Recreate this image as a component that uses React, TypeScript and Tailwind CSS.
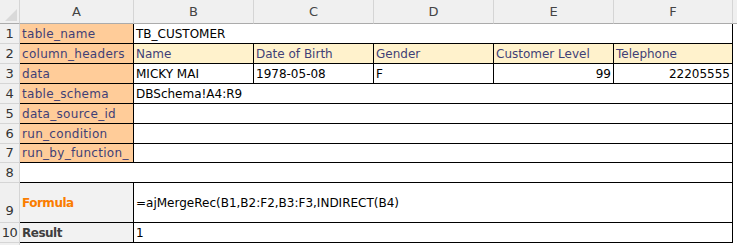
import React from "react";

/* Sheet: ajMergeRec example, laid out like a spreadsheet grid */

const font = "font-['DejaVu_Sans',sans-serif] text-[12px]";

const colHead =
  "flex items-center justify-center bg-[#f0f0f0] text-[#444] text-[13px] border-r border-r-[#d5d5d5] border-b border-b-[#ababab]";
const rowHead =
  "flex items-center justify-center bg-[#f0f0f0] text-[#333] text-[13px] tracking-[-0.5px] border-r border-r-[#d5d5d5] border-b border-b-[#d5d5d5]";

// Excel "Input" style
const inputCell =
  "flex items-center px-[2px] bg-[#ffcc99] text-[#3f3f76] tracking-[0.3px] border-r border-b border-black whitespace-nowrap overflow-hidden";
const headerCell =
  "flex items-center px-[2px] bg-[#fff2cc] text-[#3f3f76] border-r border-b border-black whitespace-nowrap overflow-hidden";
const dataCell =
  "flex items-center px-[2px] bg-white text-black border-r border-b border-black whitespace-nowrap overflow-hidden";
// "Calculation" / "Output" styles
const calcCell =
  "flex items-center px-[2px] bg-[#f2f2f2] font-bold tracking-[-0.5px] border-r border-b border-black";

const labels = [
  "table_name",
  "column_headers",
  "data",
  "table_schema",
  "data_source_id",
  "run_condition",
  "run_by_function_",
];

const headers = ["Name", "Date of Birth", "Gender", "Customer Level", "Telephone"];

export default function App() {
  return (
    <div className={`w-[737px] h-[245px] bg-white overflow-hidden ${font}`}>
      <div className="grid grid-cols-[20px_114px_120px_120px_120px_120px_119px_4px] grid-rows-[24px_repeat(6,20px)_19px_20px_40px_20px_2px]">
        {/* top-left corner */}
        <div className="bg-[#f0f0f0] border-r border-r-[#d5d5d5] border-b border-b-[#ababab] relative">
          <svg width="20" height="24" className="absolute inset-0">
            <polygon points="17,9 17,21 5,21" fill="#d9d9d9" />
          </svg>
        </div>
        {["A", "B", "C", "D", "E", "F"].map((c) => (
          <div key={c} className={colHead}>
            {c}
          </div>
        ))}
        <div className="bg-[#f0f0f0] border-b border-b-[#ababab]" />

        {/* row 1 */}
        <div className={rowHead}>1</div>
        <div className={inputCell}>{labels[0]}</div>
        <div className={`${dataCell} col-span-5`}>TB_CUSTOMER</div>
        <div />

        {/* row 2 */}
        <div className={rowHead}>2</div>
        <div className={inputCell}>{labels[1]}</div>
        {headers.map((h) => (
          <div key={h} className={headerCell}>
            {h}
          </div>
        ))}
        <div />

        {/* row 3 */}
        <div className={rowHead}>3</div>
        <div className={inputCell}>{labels[2]}</div>
        <div className={dataCell}>MICKY MAI</div>
        <div className={dataCell}>1978-05-08</div>
        <div className={dataCell}>F</div>
        <div className={`${dataCell} justify-end`}>99</div>
        <div className={`${dataCell} justify-end`}>22205555</div>
        <div />

        {/* row 4 */}
        <div className={rowHead}>4</div>
        <div className={inputCell}>{labels[3]}</div>
        <div className={`${dataCell} col-span-5`}>DBSchema!A4:R9</div>
        <div />

        {/* rows 5-7 */}
        {[5, 6, 7].map((n) => (
          <React.Fragment key={n}>
            <div className={rowHead}>{n}</div>
            <div className={inputCell}>{labels[n - 1]}</div>
            <div className={`${dataCell} col-span-5`} />
            <div />
          </React.Fragment>
        ))}

        {/* row 8 spacer */}
        <div className={rowHead}>8</div>
        <div className="col-span-6 bg-white border-r border-b border-black" />
        <div />

        {/* row 9 */}
        <div className={`${rowHead} items-end pb-[2px]`}>9</div>
        <div className={`${calcCell} text-[#fa7d00]`}>Formula</div>
        <div className={`${dataCell} col-span-5`}>
          =ajMergeRec(B1,B2:F2,B3:F3,INDIRECT(B4)
        </div>
        <div />

        {/* row 10 */}
        <div className={rowHead}>10</div>
        <div className={`${calcCell} text-[#3f3f3f]`}>Result</div>
        <div className={`${dataCell} col-span-5`}>1</div>
        <div />

        <div className="bg-[#f0f0f0] border-r border-r-[#d5d5d5]" />
        <div className="col-span-6" />
        <div />
      </div>
    </div>
  );
}
